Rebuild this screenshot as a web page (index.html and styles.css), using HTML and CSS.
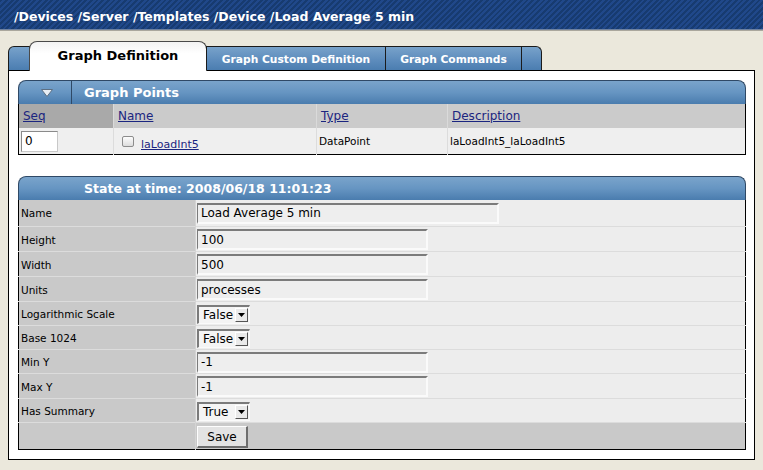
FILE: index.html
```html
<!DOCTYPE html>
<html>
<head>
<meta charset="utf-8">
<title>Load Average 5 min</title>
<link rel="stylesheet" href="styles.css">
</head>
<body>
<div class="topbar"><span class="crumbs">/Devices /Server /Templates /Device /Load Average 5 min</span></div>
<div class="page">
  <div class="tabs">
    <div class="tab-stub stub-left"></div>
    <div class="tab active">Graph Definition</div>
    <div class="tab t1">Graph Custom Definition</div>
    <div class="tab t2">Graph Commands</div>
    <div class="tab-stub stub-right"></div>
  </div>
  <div class="content">
    <div class="panel">
      <div class="phead">
        <div class="toggle"><svg width="12" height="8" viewBox="0 0 12 8"><polygon points="0.5,0.5 11.5,0.5 6,7.5" fill="#e8eef4" stroke="#5d6f82" stroke-width="1"/></svg></div>
        <div class="ptitle">Graph Points</div>
      </div>
      <table class="grid">
        <tr>
          <th class="c-seq sorted"><a href="#">Seq</a></th>
          <th class="c-name"><a href="#">Name</a></th>
          <th class="c-type"><a href="#">Type</a></th>
          <th class="c-desc"><a href="#">Description</a></th>
        </tr>
        <tr>
          <td><input class="seq" type="text" value="0"></td>
          <td><span class="namecell"><span class="cb"></span><a href="#">laLoadInt5</a></span></td>
          <td>DataPoint</td>
          <td>laLoadInt5_laLoadInt5</td>
        </tr>
      </table>
    </div>

    <div class="panel state">
      <div class="phead">
        <div class="capleft"></div>
        <div class="ptitle">State at time: 2008/06/18 11:01:23</div>
      </div>
      <table class="form">
        <tr class="r-name"><td class="lbl">Name</td><td class="val"><input class="txt wide" type="text" value="Load Average 5 min"></td></tr>
        <tr><td class="lbl">Height</td><td class="val"><input class="txt" type="text" value="100"></td></tr>
        <tr><td class="lbl">Width</td><td class="val"><input class="txt" type="text" value="500"></td></tr>
        <tr><td class="lbl">Units</td><td class="val"><input class="txt" type="text" value="processes"></td></tr>
        <tr class="r-sel"><td class="lbl">Logarithmic Scale</td><td class="val"><span class="sel"><span class="sv">False</span><span class="sb"><svg width="7" height="4" viewBox="0 0 7 4"><polygon points="0,0 7,0 3.5,4" fill="#000"/></svg></span></span></td></tr>
        <tr class="r-sel"><td class="lbl">Base 1024</td><td class="val"><span class="sel"><span class="sv">False</span><span class="sb"><svg width="7" height="4" viewBox="0 0 7 4"><polygon points="0,0 7,0 3.5,4" fill="#000"/></svg></span></span></td></tr>
        <tr class="r-sel"><td class="lbl">Min Y</td><td class="val"><input class="txt" type="text" value="-1"></td></tr>
        <tr><td class="lbl">Max Y</td><td class="val"><input class="txt" type="text" value="-1"></td></tr>
        <tr class="r-sel"><td class="lbl">Has Summary</td><td class="val"><span class="sel"><span class="sv">True</span><span class="sb"><svg width="7" height="4" viewBox="0 0 7 4"><polygon points="0,0 7,0 3.5,4" fill="#000"/></svg></span></span></td></tr>
        <tr class="r-save"><td class="lbl"></td><td class="val"><button class="save" type="button">Save</button></td></tr>
      </table>
    </div>
  </div>
</div>
</body>
</html>
```
FILE: styles.css
```css
* { box-sizing: border-box; }

body {
  margin: 0;
  background: #ebe8dc;
  font-family: "DejaVu Sans", Verdana, sans-serif;
  font-size: 10.5px;
  color: #000;
}

.topbar {
  height: 30px;
  background: repeating-linear-gradient(135deg, #173b70 0 2px, #20488a 2px 4px);
  border-bottom: 1px solid #6f82a0;
  box-shadow: 0 1px 0 #aaa79d;
}

.crumbs {
  display: block;
  padding: 5px 0 0 14px;
  line-height: 24px;
  color: #fff;
  font-weight: bold;
  font-size: 12.5px;
}

.page {
  padding: 0 8px;
}

.tabs {
  display: flex;
  align-items: flex-end;
  height: 30px;
  margin-top: 10px;
  position: relative;
  z-index: 1;
}

.tab, .tab-stub {
  height: 24px;
  background: linear-gradient(#78a2ca, #5e8dbd 55%, #4b7db0);
  border: 1px solid #1b1b1b;
  border-bottom: none;
}

.tab {
  display: flex;
  align-items: center;
  justify-content: center;
  color: #fff;
  font-weight: bold;
  font-size: 10.7px;
}

.stub-left {
  width: 22px;
  border-top-left-radius: 6px;
}

.tab.active {
  width: 178px;
  height: 30px;
  margin-left: -1px;
  margin-bottom: -1px;
  background: linear-gradient(#f3f3f3, #ffffff 40%);
  border-color: #4a4a4a;
  border-radius: 8px 8px 0 0;
  color: #000;
  font-size: 13px;
  padding-bottom: 2px;
}

.tab.t1 {
  width: 180px;
  margin-left: -1px;
  padding-top: 1px;
}

.tab.t2 {
  width: 137px;
  margin-left: -1px;
  padding-top: 1px;
}

.stub-right {
  width: 21px;
  margin-left: -1px;
  border-top-right-radius: 6px;
}

.content {
  background: #fff;
  border: 1px solid #000;
  padding: 9px 8px 8px 9px;
  height: 390px;
}

.panel.state {
  margin-top: 21px;
}

.phead {
  display: flex;
  height: 24px;
  border: 1px solid #2f4966;
  border-bottom: none;
  border-radius: 8px 8px 0 0;
  background: linear-gradient(#7aa4cb, #6695c2 50%, #4a7cae);
  overflow: hidden;
}

.toggle {
  width: 53px;
  border-right: 1px solid #2f4966;
  display: flex;
  align-items: center;
  justify-content: center;
  padding-left: 4px;
  padding-top: 1px;
}

.capleft {
  width: 53px;
}

.ptitle {
  padding-left: 12px;
  line-height: 23px;
  color: #fff;
  font-weight: bold;
  font-size: 13px;
}

.state .ptitle {
  font-size: 12.5px;
}

table {
  width: 100%;
  border-collapse: collapse;
  border: 1px solid #000;
  border-top: none;
}

.grid th {
  height: 24px;
  background: #cbcbcb;
  text-align: left;
  font-weight: normal;
  font-size: 12px;
  padding: 0 4px;
  border-left: 1px solid #dadada;
}

.grid th.sorted {
  background: #a9a9a9;
  border-left: none;
}

.grid th a, .grid td a {
  color: #1b2580;
  text-decoration: underline;
}

.c-seq { width: 95px; }
.c-name { width: 203px; }
.c-type { width: 131px; }

.grid td {
  height: 26px;
  background: #efefef;
  border-left: 1px solid #dcdcdc;
  padding: 0 2px;
}

.grid td:first-child {
  border-left: none;
  padding-left: 2px;
}

.seq {
  display: block;
  width: 37px;
  height: 21px;
  margin-top: 1px;
  background: #fff;
  border: 1px solid #8a8a8a;
  border-right-color: #c8c8c8;
  border-bottom-color: #c8c8c8;
  font-family: "DejaVu Sans", Verdana, sans-serif;
  font-size: 12px;
  padding: 0 3px;
  color: #000;
}

.namecell {
  display: flex;
  align-items: center;
  padding-left: 6px;
  gap: 7px;
  font-size: 11px;
}

.namecell a {
  margin-top: 7px;
}

.cb {
  width: 12px;
  height: 11px;
  border: 1px solid #8c8c8c;
  border-radius: 2px;
  background: linear-gradient(#fdfdfd, #dcdcdc);
  margin-top: 1px;
}

.form td {
  height: 25px;
  padding: 1px 0 0 0;
  border-top: 1px solid #dcdcdc;
}

.form tr:first-child td {
  border-top: none;
  height: 27px;
}

.form tr.r-sel td {
  height: 24px;
}

.form tr.r-save td {
  height: 27px;
  background: #c9c9c9;
}

.form td.lbl {
  width: 177px;
  background: #c9c9c9;
  padding-left: 2px;
}

.form td.val {
  background: #ededed;
  border-left: 1px solid #d4d4d4;
  padding-left: 1px;
}

.form tr.r-save td.val {
  background: #c9c9c9;
}

.txt {
  display: block;
  width: 231px;
  height: 21px;
  background: #eeeeee;
  border-top: 2px solid #7b7b7b;
  border-left: 1px solid #7b7b7b;
  border-right: 2px solid #fafafa;
  border-bottom: 2px solid #fafafa;
  font-family: "DejaVu Sans", Verdana, sans-serif;
  font-size: 12px;
  color: #000;
  padding: 0 3px;
}

.txt.wide {
  width: 302px;
}

.sel {
  display: flex;
  align-items: center;
  width: 53px;
  height: 19px;
  background: #f4f4f4;
  border-top: 2px solid #7b7b7b;
  border-left: 2px solid #7b7b7b;
  border-right: 1px solid #fafafa;
  border-bottom: 1px solid #fafafa;
  font-size: 12px;
}

.sv {
  flex: 1;
  padding-left: 4px;
}

.sb {
  width: 13px;
  height: 14px;
  margin-right: 1px;
  background: #eaeaea;
  border-top: 1px solid #fff;
  border-left: 1px solid #fff;
  border-right: 1px solid #555;
  border-bottom: 1px solid #555;
  display: flex;
  align-items: center;
  justify-content: center;
}

.save {
  display: block;
  width: 51px;
  height: 22px;
  margin-top: 1px;
  background: #e3e3e3;
  border-top: 1px solid #fdfdfd;
  border-left: 1px solid #fdfdfd;
  border-right: 2px solid #6e6e6e;
  border-bottom: 2px solid #6e6e6e;
  font-family: "DejaVu Sans", Verdana, sans-serif;
  font-size: 12px;
  color: #000;
  padding: 0;
}
```
